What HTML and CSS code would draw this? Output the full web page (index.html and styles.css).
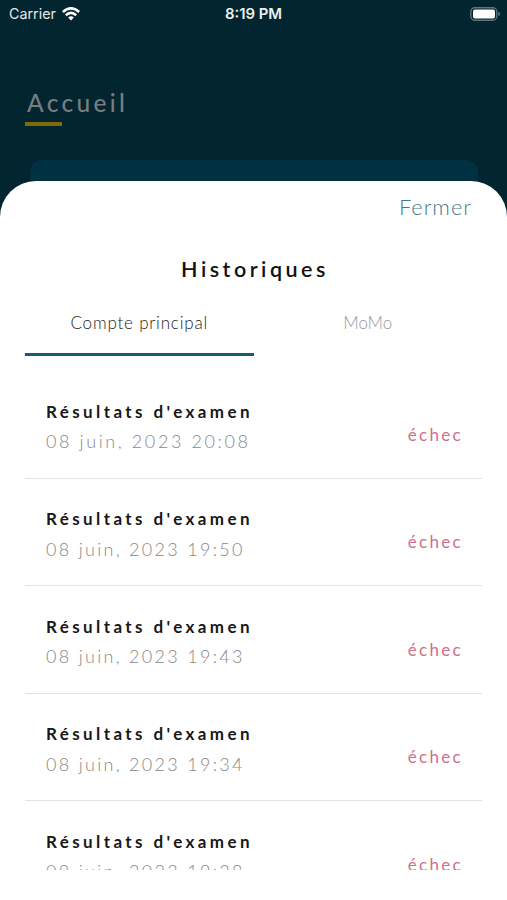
FILE: index.html
```html
<!DOCTYPE html>
<html lang="fr">
<head>
<meta charset="utf-8">
<title>Historiques</title>
<link rel="stylesheet" href="styles.css">
</head>
<body>
<header class="status">
  <div class="network"><span class="carrier">Carrier</span>
    <svg class="wifi" viewBox="0 0 18 14" width="18" height="14"><g fill="none" stroke="#fff" stroke-width="2.5"><path d="M.8 5Q9-2.2 17.2 5"/><path d="M3.8 8.2Q9 3.5 14.2 8.2"/></g><path d="M6.1 10.4Q9 8 11.9 10.4L9 13.5Z" fill="#fff"/></svg>
  </div>
  <time class="clock">8:19 PM</time>
  <svg class="battery" viewBox="0 0 31 14" width="31" height="14"><rect x=".8" y=".8" width="26" height="12.4" rx="4" fill="none" stroke="#5d747b" stroke-width="1.4"/><rect x="3" y="2.6" width="22" height="8.8" rx="2" fill="#fff"/><path d="M28.3 4.8Q30.2 5.4 30.2 7T28.3 9.2Z" fill="#5d747b"/></svg>
</header>
<div class="backdrop">
  <h1 class="page-title">Accueil</h1>
  <div class="card"></div>
</div>
<main class="sheet">
  <button class="close">Fermer</button>
  <h2 class="title">Historiques</h2>
  <nav class="tabs"><a class="tab active">Compte principal</a><a class="tab">MoMo</a></nav>
  <ul class="list">
    <li class="row"><div><h3 class="name">Résultats d'examen</h3><p class="date">08 juin, 2023 20:08</p></div><span class="state">échec</span></li>
    <li class="row"><div><h3 class="name">Résultats d'examen</h3><p class="date narrow">08 juin, 2023 19:50</p></div><span class="state">échec</span></li>
    <li class="row"><div><h3 class="name">Résultats d'examen</h3><p class="date narrow">08 juin, 2023 19:43</p></div><span class="state">échec</span></li>
    <li class="row"><div><h3 class="name">Résultats d'examen</h3><p class="date narrow">08 juin, 2023 19:34</p></div><span class="state">échec</span></li>
    <li class="row"><div><h3 class="name">Résultats d'examen</h3><p class="date narrow">08 juin, 2023 19:28</p></div><span class="state">échec</span></li>
  </ul>
</main>
</body>
</html>
```
FILE: styles.css
```css
* { box-sizing: border-box; margin: 0; padding: 0; }
body { width: 507px; height: 900px; overflow: hidden; background: #02252f; font-family: Lato, "Liberation Sans", sans-serif; }
.status { display: grid; grid-template-columns: 1fr auto 1fr; align-items: center; height: 27px; padding: 0 6px 0 9px; color: #fff; font-family: Inter, sans-serif; }
.network { display: flex; align-items: center; gap: 6px; }
.carrier { font-size: 14.3px; color: #e3e9ea; }
.clock { margin-left: -3px; font-size: 14.9px; font-weight: 600; color: #eaf0f1; }
.battery { justify-self: end; }
.backdrop { height: 154px; padding: 61px 28px 0 27px; }
.page-title { width: max-content; height: 38px; color: #777c81; font-size: 24.5px; line-height: 30px; font-weight: 500; letter-spacing: 3.3px; }
.page-title::after { content: ""; display: block; width: 37px; height: 3.5px; margin: 4px 0 0 -2px; background: #7d6c09; }
.card { height: 60px; margin: 34px 1px 0 3px; background: #003142; border-radius: 12px; }
.sheet { position: relative; height: 719px; padding: 0 25px; background: #fff; border-radius: 36px 36px 0 0; }
.close { display: block; margin-left: auto; margin-right: 10px; padding-top: 11px; border: 0; background: none; color: #41788e; font: 300 21.8px/30px Lato, sans-serif; letter-spacing: 1px; }
.title { margin-top: 32px; text-align: center; font-size: 21.5px; line-height: 30px; font-weight: 600; letter-spacing: 3.5px; text-indent: 3px; color: #111; }
.tabs { display: flex; height: 72px; }
.tab { flex: 1; padding-top: 24px; text-align: center; font-size: 17px; line-height: 30px; font-weight: 300; color: #999; }
.active { color: #222; border-bottom: 3px solid #155d75; letter-spacing: .8px; }
.list { height: 514px; overflow: hidden; list-style: none; padding-top: 15px; }
.row { display: flex; justify-content: space-between; height: 107.5px; padding: 27.5px 19px 0 21px; border-bottom: 1.5px solid #e2e2e2; }
.name { font-size: 17px; line-height: 26px; font-weight: 700; letter-spacing: 3.4px; color: #181818; white-space: nowrap; }
.date { margin-top: 1.5px; font-size: 18px; line-height: 30px; font-weight: 300; letter-spacing: 2.6px; color: #888; white-space: nowrap; }
.narrow { letter-spacing: 2.3px; }
.state { padding-top: 24px; font-size: 17px; line-height: 24px; letter-spacing: 2.3px; color: #d06f89; }
```
